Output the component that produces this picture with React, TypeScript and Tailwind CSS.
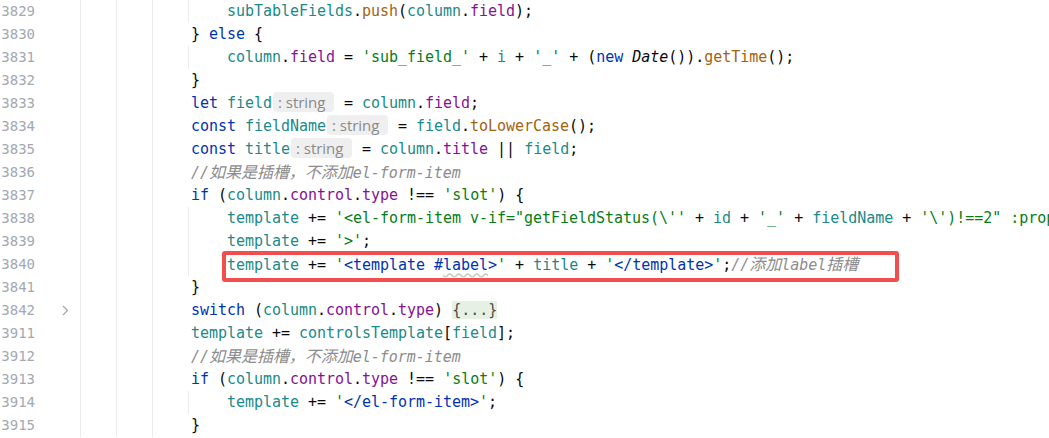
type Tok = [string, string] | { hint: true } | { fold: true }

const K = 'text-[#0033b3]'
const V = 'text-[#1a8a8a]'
const P = 'text-[#871094]'
const M = 'text-[#a3620f]'
const S = 'text-[#067d17]'
const T = 'text-[#0033b3]'
const D = 'text-[#080808]'
const C = 'text-[#8c8c8c] italic'
const CJK = 'text-[16px]'

const hint: Tok = { hint: true }

const comment: Tok[] = [
  ['//', C],
  ['如果是插槽，不添加', `${C} ${CJK}`],
  ['el-form-item', C],
]

const ifSlot: Tok[] = [
  ['if', K], [' (', D], ['column', V], ['.', D], ['control', P], ['.', D], ['type', P],
  [' !== ', D], ["'slot'", S], [') {', D],
]

const rows: { n: number; indent: number; toks: Tok[]; fold?: boolean; boxed?: boolean }[] = [
  { n: 3829, indent: 4, toks: [['subTableFields', V], ['.', D], ['push', M], ['(', D], ['column', V], ['.', D], ['field', P], [');', D]] },
  { n: 3830, indent: 3, toks: [['} ', D], ['else', K], [' {', D]] },
  {
    n: 3831, indent: 4, toks: [
      ['column', V], ['.', D], ['field', P], [' = ', D], ["'sub_field_'", S], [' + ', D], ['i', V], [' + ', D],
      ["'_'", S], [' + (', D], ['new', K], [' ', D], ['Date', `${D} italic`], ['()).', D], ['getTime', M], ['();', D],
    ],
  },
  { n: 3832, indent: 3, toks: [['}', D]] },
  { n: 3833, indent: 3, toks: [['let', K], [' ', D], ['field', V], hint, [' = ', D], ['column', V], ['.', D], ['field', P], [';', D]] },
  { n: 3834, indent: 3, toks: [['const', K], [' ', D], ['fieldName', V], hint, [' = ', D], ['field', V], ['.', D], ['toLowerCase', M], ['();', D]] },
  { n: 3835, indent: 3, toks: [['const', K], [' ', D], ['title', V], hint, [' = ', D], ['column', V], ['.', D], ['title', P], [' || ', D], ['field', V], [';', D]] },
  { n: 3836, indent: 3, toks: comment },
  { n: 3837, indent: 3, toks: ifSlot },
  {
    n: 3838, indent: 4, toks: [
      ['template', V], [' += ', D], ["'<el-form-item v-if=\"getFieldStatus(\\''", S], [' + ', D], ['id', V], [' + ', D],
      ["'_'", S], [' + ', D], ['fieldName', V], [' + ', D], ["'\\')!==2\" :prop=\"'", S], [' + ', D], ['field', V], [';', D],
    ],
  },
  { n: 3839, indent: 4, toks: [['template', V], [' += ', D], ["'>'", S], [';', D]] },
  {
    n: 3840, indent: 4, boxed: true, toks: [
      ['template', V], [' += ', D], ["'", S], ['<template #', T], ['label', `${T} underline decoration-wavy decoration-[#c3cbbf] underline-offset-[2px]`],
      ['>', T], ["'", S], [' + ', D], ['title', V], [' + ', D], ["'", S], ['</template>', T], ["'", S], [';', D],
      ['//', C], ['添加', `${C} ${CJK}`], ['label', C], ['插槽', `${C} ${CJK}`],
    ],
  },
  { n: 3841, indent: 3, toks: [['}', D]] },
  { n: 3842, indent: 3, fold: true, toks: [['switch', K], [' (', D], ['column', V], ['.', D], ['control', P], ['.', D], ['type', P], [') ', D], { fold: true }] },
  { n: 3911, indent: 3, toks: [['template', V], [' += ', D], ['controlsTemplate', V], ['[', D], ['field', V], ['];', D]] },
  { n: 3912, indent: 3, toks: comment },
  { n: 3913, indent: 3, toks: ifSlot },
  { n: 3914, indent: 4, toks: [['template', V], [' += ', D], ["'", S], ['</el-form-item>', T], ["'", S], [';', D]] },
  { n: 3915, indent: 3, toks: [['}', D]] },
]

function Token({ t }: { t: Tok }) {
  if ('hint' in t) {
    return (
      <span className="mx-[1px] inline-block h-[20px] w-[61px] rounded-[4px] bg-[#efefef] pl-[5px] align-top font-['Open_Sans',sans-serif] text-[15px] leading-[20px] text-[#8a8a8a]">
        : string
      </span>
    )
  }
  if ('fold' in t) {
    return <span className="bg-[#e7f1e3] text-[#4d4d4d]">{'{...}'}</span>
  }
  return <span className={t[1]}>{t[0]}</span>
}

export default function App() {
  return (
    <div className="h-[438px] w-[1049px] overflow-hidden bg-white font-['DejaVu_Sans_Mono','Noto_Sans_CJK_SC',monospace]">
      {rows.map((r) => (
        <div key={r.n} className="flex h-[23px]">
          <div className="w-[35px] shrink-0 text-right text-[14px] leading-[23px] text-[#a3a8b2]">{r.n}</div>
          <div className="flex w-[45px] shrink-0 items-center pl-[27px]">
            {r.fold && (
              <svg width="7" height="11" viewBox="0 0 7 11" fill="none" stroke="#a0a5ad" strokeWidth="1.2">
                <path d="M1 1l4.5 4.5L1 10" />
              </svg>
            )}
          </div>
          {/* indent guides, one per level */}
          {Array.from({ length: r.indent }, (_, i) => (
            <span key={i} className="h-full w-[36px] shrink-0 border-l border-[#ececec]" />
          ))}
          <div className="relative whitespace-pre pl-[3px] text-[15px] leading-[23px] tracking-[-0.03px] text-[#080808]">
            {r.toks.map((t, i) => (
              <Token key={i} t={t} />
            ))}
            {r.boxed && (
              <div className="absolute -left-[2px] -top-[2px] h-[31px] w-[677px] rounded-[3px] border-4 border-[#f24e4e]" />
            )}
          </div>
        </div>
      ))}
    </div>
  )
}
